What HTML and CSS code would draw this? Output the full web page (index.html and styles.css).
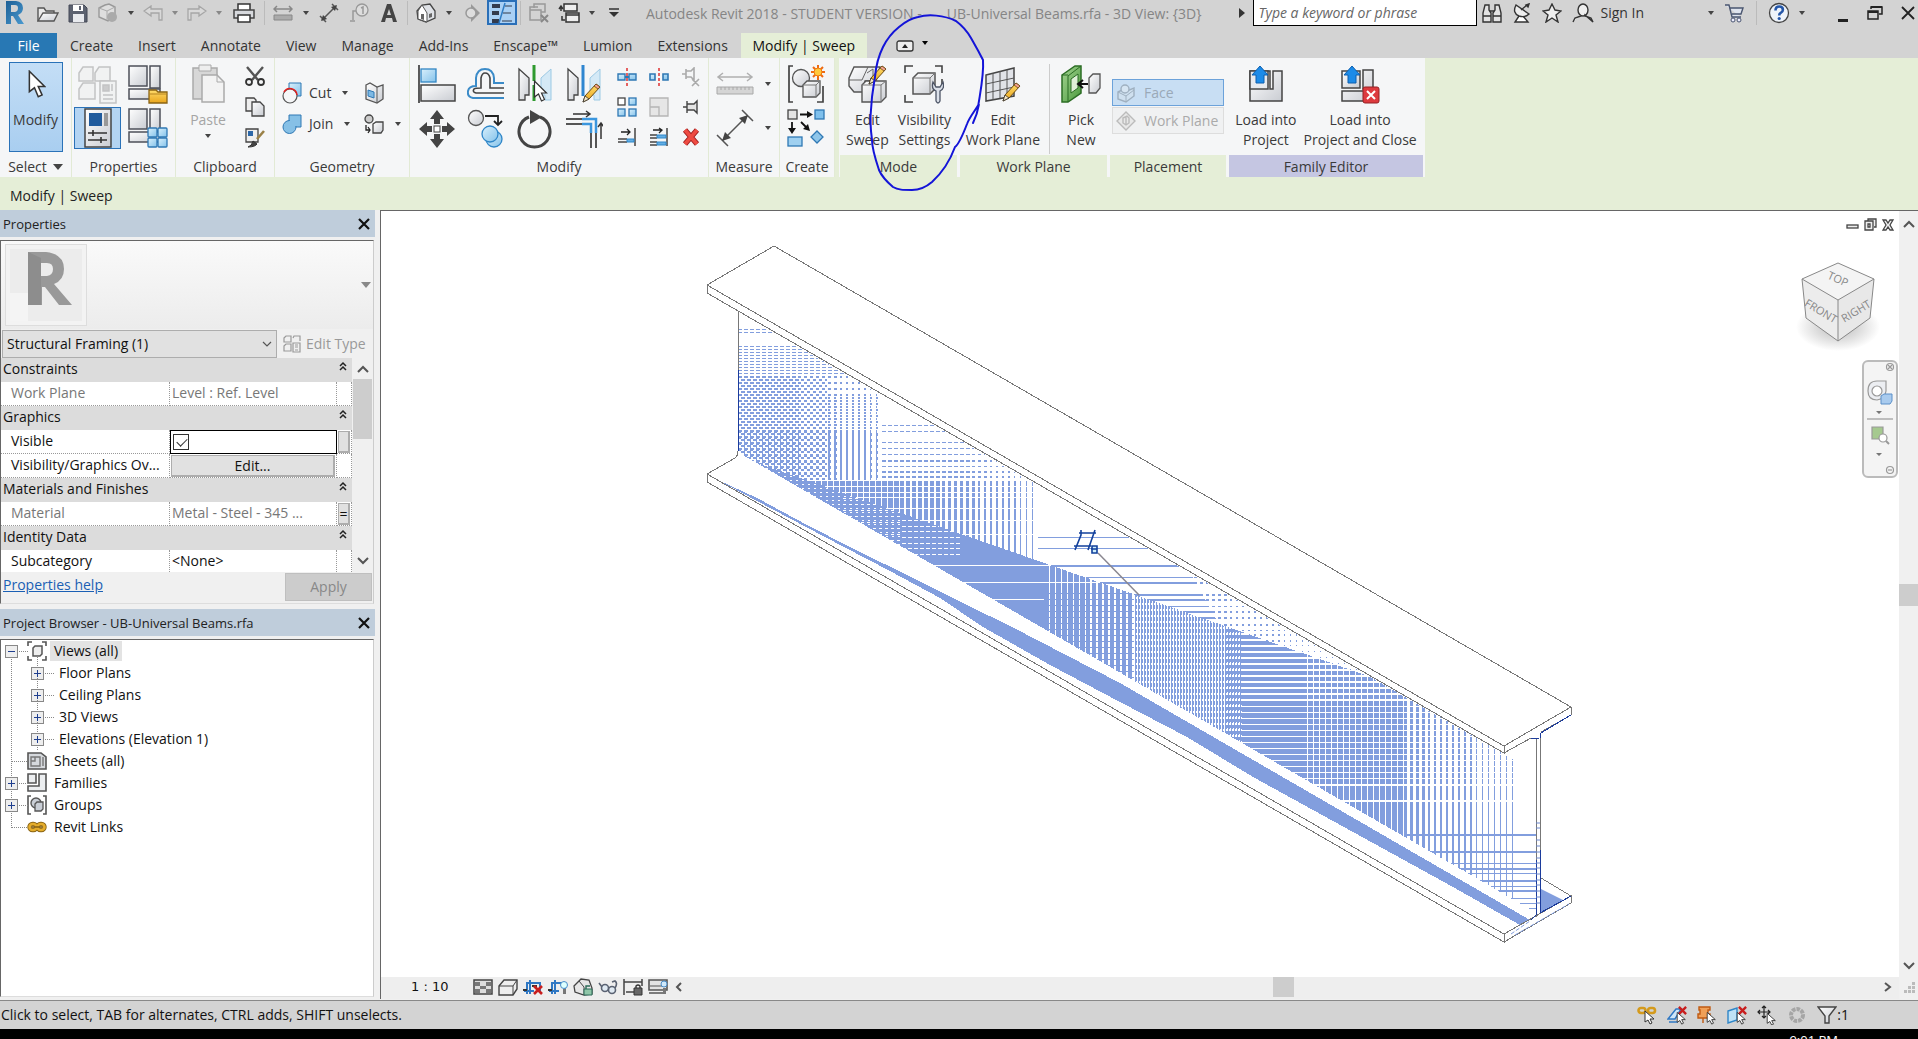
FILE: index.html
```html
<!DOCTYPE html>
<html lang="en">
<head>
<meta charset="utf-8">
<title>Autodesk Revit 2018</title>
<link rel="stylesheet" href="styles.css">
</head>
<body>
<svg class="defs" aria-hidden="true">
  <defs>
    <linearGradient id="gr" x1="0" y1="0" x2="1" y2="1"><stop offset="0" stop-color="#fff"/><stop offset="1" stop-color="#c9ccd2"/></linearGradient>
    <linearGradient id="bl" x1="0" y1="0" x2="1" y2="1"><stop offset="0" stop-color="#d9f0fc"/><stop offset="1" stop-color="#84c2ea"/></linearGradient>
    <linearGradient id="ye" x1="0" y1="0" x2="0" y2="1"><stop offset="0" stop-color="#ffdc6b"/><stop offset="1" stop-color="#e9a51c"/></linearGradient>
    <linearGradient id="gn" x1="0" y1="0" x2="1" y2="1"><stop offset="0" stop-color="#a5d493"/><stop offset="1" stop-color="#4a9a3c"/></linearGradient>
    <linearGradient id="rl" x1="0" y1="0" x2="1" y2="1"><stop offset="0" stop-color="#1d5f95"/><stop offset="1" stop-color="#4a9ad0"/></linearGradient>
    <radialGradient id="sh"><stop offset="0" stop-color="#999" stop-opacity=".7"/><stop offset="1" stop-color="#999" stop-opacity="0"/></radialGradient>
    <symbol id="pencil" viewBox="0 0 20 20"><path d="M1 19l2-6L14 1l4 3L7 16z" fill="url(#ye)" stroke="#6b4a12"/><path d="M1 19l2-6 4 3z" fill="#f8e7c4" stroke="#333" stroke-width=".8"/><path d="M12 3l2-2 4 3-2 2z" fill="#f0a090" stroke="#6b4a12" stroke-width=".8"/></symbol>
    <symbol id="cursor" viewBox="0 0 14 22"><path d="M1 1v16l4-3 3 7 3-1.500-3-6.500h5z" fill="#fff" stroke="#333" stroke-width="1.200"/></symbol>
    <symbol id="family" viewBox="0 0 40 40"><g fill="url(#gr)" stroke="#4d505a" stroke-width="1.500"><rect x="1" y="1" width="18" height="20"/><path d="M22 1h10v22H22z"/><path d="M1 24h31v10H1z"/></g></symbol>
    <symbol id="bincur" viewBox="0 0 20 20"><path d="M8 6v11l3-2 2 4 2-1-2-4h4z" fill="#fff" stroke="#333"/></symbol>
    <symbol id="redx" viewBox="0 0 10 10"><path d="M1 1l8 8M9 1L1 9" stroke="#c81e1e" stroke-width="2.600"/></symbol>
  </defs>
</svg>

<header class="titlebar">
  <div class="qat">
    <button class="q logo" aria-label="Revit"><svg width="20" height="26" viewBox="0 0 20 26"><path fill-rule="evenodd" d="M1 1h10q7 1 7 7 0 5-5 7l6 9h-6l-5-8H6v8H1zM6 5v7h4q3-.500 3-4 0-3-3-3z" fill="url(#rl)"/></svg></button>
    <button class="q" aria-label="Open"><svg width="22" height="20" viewBox="0 0 22 20"><path d="M1 18V5h6l2 3h8v3" fill="#e9e9e9" stroke="#555" stroke-width="1.400"/><path d="M1 18l5-8h15l-4 8z" fill="url(#gr)" stroke="#555" stroke-width="1.400"/></svg></button>
    <button class="q" aria-label="Save"><svg width="20" height="20" viewBox="0 0 20 20"><path d="M1 2h15l3 3v14H1z" fill="#5c6270" stroke="#444956"/><path d="M5 2h10v6H5z" fill="#fff"/><path d="M5 11h11v8H5z" fill="#e8eaee"/><path d="M11 3h2v4h-2z" fill="#5c6270"/></svg></button>
    <button class="q" aria-label="Synchronize"><svg width="22" height="22" viewBox="0 0 22 22"><path d="M2 6l6-3 4-1 6 3v8l-7 6-9-4z" fill="#dedede" stroke="#999" stroke-width="1.400"/><path d="M2 6l8 3v9M10 9l8-4" fill="none" stroke="#aaa"/><circle cx="15" cy="15" r="5" fill="#aaa"/></svg></button>
    <button class="c" aria-label="Menu"></button>
    <button class="q n" aria-label="Undo"><svg width="20" height="16" viewBox="0 0 20 16"><path d="M8 1L1 6l7 5V8h8v7h3V4H8z" fill="#d9d9d9" stroke="#a6a6a6" stroke-width="1.300"/></svg></button>
    <button class="c dim" aria-label="Undo list"></button>
    <button class="q n" aria-label="Redo"><svg width="20" height="16" viewBox="0 0 20 16"><path d="M12 1l7 5-7 5V8H4v7H1V4h11z" fill="#d9d9d9" stroke="#a6a6a6" stroke-width="1.300"/></svg></button>
    <button class="c dim" aria-label="Redo list"></button>
    <button class="q w" aria-label="Print"><svg width="22" height="20" viewBox="0 0 22 20"><path d="M5 7V1h12v6" fill="#fff" stroke="#333" stroke-width="1.500"/><path d="M1 7h20v8H1z" fill="#d7d9dd" stroke="#444" stroke-width="1.500"/><path d="M5 12h12v7H5z" fill="#fff" stroke="#333" stroke-width="1.500"/></svg></button>
    <i class="sep"></i>
    <button class="q" aria-label="Measure"><svg width="20" height="16" viewBox="0 0 20 16"><path d="M1 4h18M4 1L1 4l3 3M16 1l3 3-3 3" fill="none" stroke="#888" stroke-width="1.500"/><path d="M1 10h18v5H1z" fill="#aaa" stroke="#888"/></svg></button>
    <button class="c" aria-label="Menu"></button>
    <button class="q" aria-label="Aligned dimension"><svg width="20" height="20" viewBox="0 0 20 20"><path d="M3 17L17 3M1 13l6 6M13 1l6 6" stroke="#555" stroke-width="1.500"/><path d="M2 18l6-2-4-4zM18 2l-6 2 4 4z" fill="#444"/></svg></button>
    <button class="q" aria-label="Tag"><svg width="20" height="20" viewBox="0 0 20 20"><circle cx="13" cy="7" r="6" fill="#ddd" stroke="#999" stroke-width="1.300"/><path d="M7 8H4v9M1 18h5M12 5l2-1v7" fill="none" stroke="#999" stroke-width="1.500"/></svg></button>
    <button class="q" aria-label="Text"><svg width="18" height="20" viewBox="0 0 18 20"><path fill-rule="evenodd" d="M7 1h4l6 18h-4l-1-4H6l-1 4H1zM9 6l-2 6h4z" fill="#444"/></svg></button>
    <i class="sep"></i>
    <button class="q" aria-label="3D view"><svg width="20" height="20" viewBox="0 0 20 20"><path d="M1 8l5-6 8-1 5 7v7l-9 4-8-3z" fill="#dfe2e7" stroke="#444" stroke-width="1.300"/><path d="M2 8l4-6 5 8v9l-9-3z" fill="#fff" stroke="#555"/><path d="M5 11h3v6l-3-1zM13 11l3-1v4l-3 1z" fill="#666"/></svg></button>
    <button class="c" aria-label="Menu"></button>
    <button class="q" aria-label="Section"><svg width="18" height="20" viewBox="0 0 18 20"><circle cx="8" cy="10" r="5" fill="#ddd" stroke="#999" stroke-width="1.500"/><path d="M8 1l9 9-9 9V15q5-1 5-5T8 5z" fill="#999"/></svg></button>
    <button class="q on" aria-label="Thin lines"><svg width="24" height="22" viewBox="0 0 24 22"><path d="M2 4h8M2 11h7M2 19h7" stroke="#333b4d" stroke-width="4"/><path d="M15 4h7M13 11h8M12 19h10" stroke="#333b4d" stroke-width="1.200"/><path d="M15 1L9 21" stroke="#2f7cc4" stroke-width="1.500"/></svg></button>
    <i class="sep"></i>
    <button class="q" aria-label="Close hidden"><svg width="22" height="20" viewBox="0 0 22 20"><path d="M6 5V1h11v8h-4M2 7h11v10H2zM2 7V4h8" fill="none" stroke="#999" stroke-width="1.500"/><path d="M13 12l7 7M20 12l-7 7" stroke="#888" stroke-width="2"/></svg></button>
    <button class="q" aria-label="Switch windows"><svg width="22" height="22" viewBox="0 0 22 22"><path d="M6 2h13v7H6zM8 11h13v9H8z" fill="#eee" stroke="#333" stroke-width="1.500"/><path d="M8 13h13M3 5v4M1 7l2-3 2 3M4 14v4h3" fill="none" stroke="#333" stroke-width="1.500"/></svg></button>
    <button class="c" aria-label="Menu"></button>
    <button class="q n" aria-label="Customize"><svg width="12" height="10" viewBox="0 0 12 10"><path d="M1 1h10" stroke="#333" stroke-width="1.500"/><path d="M1 4h10L6 9z" fill="#333"/></svg></button>
  </div>
  <h1 class="title"><span>Autodesk Revit 2018 - STUDENT VERSION -</span><span>UB-Universal Beams.rfa - 3D View: {3D}</span></h1>
  <div class="info">
    <i class="right-tri"></i>
    <input class="search" type="text" placeholder="Type a keyword or phrase" aria-label="Search">
    <button class="q" aria-label="Find"><svg width="20" height="20" viewBox="0 0 20 20"><path d="M3 2h4v5l2 3v9H1v-9zM13 2h4l2 8v9h-8v-9l2-3z" fill="#e3e3e3" stroke="#333" stroke-width="1.400"/><path d="M8 8h4M1 13h8M11 13h8" stroke="#333" stroke-width="1.400"/></svg></button>
    <button class="q" aria-label="Communication"><svg width="18" height="20" viewBox="0 0 18 20"><path d="M6 13l-4 6h13l-5-6" fill="#fff" stroke="#333" stroke-width="1.400"/><path d="M3 2q-4 8 3 11 6 2 10-2z" fill="#eee" stroke="#333" stroke-width="1.400"/><path d="M8 7l6-5M16 1l-3 1 2 2z" stroke="#333" stroke-width="1.400"/></svg></button>
    <button class="q" aria-label="Favorites"><svg width="20" height="20" viewBox="0 0 20 20"><path d="M10 1l3 6 6 1-5 4 2 7-6-4-6 4 2-7-5-4 6-1z" fill="#eee" stroke="#333" stroke-width="1.400"/></svg></button>
    <button class="signin"><svg width="22" height="20" viewBox="0 0 22 20"><ellipse cx="11" cy="7" rx="5" ry="6" fill="#eee" stroke="#333" stroke-width="1.400"/><path d="M1 19l2-4 6-2v-1M13 12v1l6 2 2 4z" fill="#eee" stroke="#333" stroke-width="1.400"/></svg>Sign In</button>
    <button class="c" aria-label="Account menu"></button>
    <button class="q" aria-label="App store"><svg width="20" height="20" viewBox="0 0 20 20"><path d="M1 2h4l3 12h9M6 5h13l-2 6H8" fill="#dfe4ee" stroke="#4a5670" stroke-width="1.400"/><circle cx="9" cy="17" r="2" fill="#eef" stroke="#4a5670"/><circle cx="15" cy="17" r="2" fill="#eef" stroke="#4a5670"/></svg></button>
    <i class="sep"></i>
    <button class="q" aria-label="Help"><svg width="22" height="22" viewBox="0 0 22 22"><circle cx="11" cy="11" r="9.500" fill="#eef3fa" stroke="#444" stroke-width="1.300"/><path d="M7.500 8.500q0-4 3.700-4t3.700 3.200q0 2-2.200 3.200-1.500.800-1.500 2.600" fill="none" stroke="#2456a8" stroke-width="2.600"/><circle cx="11.200" cy="16.500" r="1.600" fill="#2456a8"/></svg></button>
    <button class="c" aria-label="Help menu"></button>
    <span class="winctl">
      <button aria-label="Minimize"><svg width="12" height="20" viewBox="0 0 12 20"><path d="M1 16h10v3H1z" fill="#222"/></svg></button>
      <button aria-label="Restore"><svg width="16" height="16" viewBox="0 0 16 16"><path d="M4 4V2h11v7h-3M1 6h10v8H1z" fill="none" stroke="#222" stroke-width="1.500"/><path d="M1 6h10v2H1zM4 1h11v2H4z" fill="#222"/></svg></button>
      <button aria-label="Close"><svg width="14" height="14" viewBox="0 0 14 14"><path d="M1 1l12 12M13 1L1 13" stroke="#222" stroke-width="1.800"/></svg></button>
    </span>
  </div>
</header>

<nav class="tabs">
  <button class="file">File</button>
  <button>Create</button><button>Insert</button><button>Annotate</button><button>View</button><button>Manage</button><button>Add-Ins</button><button>Enscape™</button><button>Lumion</button><button>Extensions</button>
  <button class="active">Modify | Sweep</button>
  <button class="toggle" aria-label="Minimize ribbon"><svg width="18" height="12" viewBox="0 0 18 12"><rect x="1" y="1" width="16" height="10" rx="2" fill="#eee" stroke="#333" stroke-width="1.300"/><path d="M6 8l3-4 3 4z" fill="#222"/></svg></button>
  <button class="c dark" aria-label="Ribbon menu"></button>
</nav>

<section class="ribbon">
  <div class="panel p-select">
    <div class="body"><button class="big modify"><svg width="40" height="40" viewBox="0 0 40 40"><use href="#cursor" x="12" y="6" width="18" height="28"/></svg>Modify</button></div>
    <h2>Select <i class="tri"></i></h2>
  </div>
  <div class="panel p-props">
    <div class="body grid2">
      <button aria-label="Type properties"><svg width="40" height="40" viewBox="0 0 40 40" opacity=".45"><g fill="#eee" stroke="#888" stroke-width="1.500"><path d="M1 8l4-6h10v14H1zM17 8l4-6h11v14H17zM1 24l4-6h12v16H1z"/><path d="M22 16h16v22H22z"/></g><path d="M25 20h6v6h-6zM25 30h10M25 34h10M34 19v7" stroke="#888" fill="#999" stroke-width="1.500"/></svg></button>
      <button aria-label="Family types"><svg width="40" height="40" viewBox="0 0 40 40"><use href="#family"/><path d="M21 25h7l2 2h9v11H21z" fill="url(#ye)" stroke="#8a6414" stroke-width="1.300"/><path d="M21 29h18" stroke="#b58320"/></svg></button>
      <button class="sel" aria-label="Properties"><svg width="28" height="40" viewBox="0 0 28 40"><rect x="1" y="1" width="26" height="38" fill="url(#gr)" stroke="#444" stroke-width="1.500"/><path d="M5 5h13v13H5z" fill="#1f5a9c"/><path d="M20 5h4v13h-4z" fill="#999"/><path d="M4 25h19M4 32h19M9 22v6M17 29v6" stroke="#333" stroke-width="1.600"/></svg></button>
      <button aria-label="Type catalog"><svg width="40" height="40" viewBox="0 0 40 40"><use href="#family"/><g fill="url(#bl)" stroke="#2f78b4" stroke-width="1.300"><rect x="20" y="20" width="9" height="9" rx="1"/><rect x="30" y="20" width="9" height="9" rx="1"/><rect x="20" y="30" width="9" height="9" rx="1"/><rect x="30" y="30" width="9" height="9" rx="1"/></g></svg></button>
    </div>
    <h2>Properties</h2>
  </div>
  <div class="panel p-clip">
    <div class="body row">
      <button class="big off"><svg width="40" height="40" viewBox="0 0 40 40"><path d="M5 4h24v31H5z" fill="#d7d7d7" stroke="#aaa" stroke-width="1.500"/><path d="M11 1h12v6H11z" fill="#eee" stroke="#aaa"/><path d="M14 11h15l7 7v20H14z" fill="#f3f3f3" stroke="#aaa" stroke-width="1.500"/><path d="M29 11v7h7" fill="none" stroke="#aaa"/></svg>Paste<i class="caret"></i></button>
      <div class="stack">
        <button aria-label="Cut"><svg width="22" height="20" viewBox="0 0 22 20"><path d="M3 1l11 13M19 1L8 14" stroke="#555" stroke-width="2.400"/><circle cx="5" cy="16" r="3" fill="none" stroke="#333" stroke-width="1.800"/><circle cx="17" cy="16" r="3" fill="none" stroke="#333" stroke-width="1.800"/></svg></button>
        <button aria-label="Copy"><svg width="22" height="20" viewBox="0 0 22 20"><path d="M2 1h8l2 2v11H2z" fill="#eee" stroke="#444" stroke-width="1.300"/><path d="M8 5h8l4 4v10H8z" fill="url(#gr)" stroke="#444" stroke-width="1.300"/></svg></button>
        <button aria-label="Match"><svg width="22" height="20" viewBox="0 0 22 20"><path d="M2 1h12v13H2z" fill="#eee" stroke="#444" stroke-width="1.300"/><path d="M4 3h5v5H4z" fill="#2c67a8"/><path d="M20 3l-7 8" stroke="#9a8046" stroke-width="2.600"/><path d="M4 19q4-1 5-6l4 3q-2 3-9 3z" fill="#444" stroke="#333"/></svg></button>
      </div>
    </div>
    <h2>Clipboard</h2>
  </div>
  <div class="panel p-geo">
    <div class="body geo">
      <button><svg width="20" height="22" viewBox="0 0 20 22"><path d="M7 1h12v13H7z" fill="url(#bl)" stroke="#2f78b4"/><circle cx="8" cy="14" r="7" fill="#f5f6f7" stroke="#555" stroke-width="1.200"/><path d="M2 10a7 7 0 0 1 13 3" fill="none" stroke="#e02020" stroke-width="1.600"/></svg>Cut<i class="caret"></i></button>
      <button aria-label="Cope"><svg width="20" height="22" viewBox="0 0 20 22"><path d="M2 3l4-2 7 4 6-2v14l-6 4-11-4z" fill="url(#gr)" stroke="#555" stroke-width="1.300"/><path d="M13 5v16" stroke="#555"/><path d="M4 8l6 2v6l-6-2z" fill="#7db9e4" stroke="#2f78b4"/></svg></button>
      <button><svg width="20" height="22" viewBox="0 0 20 22"><path d="M7 2h12v12H7z" fill="#86c0e6" stroke="#2f78b4"/><circle cx="7.500" cy="14" r="6.500" fill="#86c0e6" stroke="#2f78b4"/><path d="M8 3h10v10H8z" fill="#86c0e6"/></svg>Join<i class="caret"></i></button>
      <button aria-label="Split face"><svg width="20" height="22" viewBox="0 0 20 22"><circle cx="5" cy="6" r="4" fill="#ccc" stroke="#444" stroke-width="1.300"/><path d="M9 11l3-2h7v8l-2 3H9z" fill="url(#gr)" stroke="#444" stroke-width="1.300"/><path d="M2 12v5h4M4 14l2 3-2 3" fill="none" stroke="#222" stroke-width="1.300"/></svg><i class="caret"></i></button>
    </div>
    <h2>Geometry</h2>
  </div>
  <div class="panel p-modify">
    <div class="body row">
      <div class="grid4">
        <button aria-label="Align"><svg width="38" height="40" viewBox="0 0 38 40"><path d="M1 1v38" stroke="#333" stroke-width="1.600"/><rect x="3" y="5" width="15" height="13" fill="url(#bl)" stroke="#3286c4" stroke-width="1.300"/><rect x="3" y="21" width="34" height="16" fill="url(#gr)" stroke="#444" stroke-width="1.500"/></svg></button>
        <button aria-label="Offset"><svg width="38" height="40" viewBox="0 0 38 40"><path d="M37 34H6q-6-1-5-7 1-5 8-5V14q1-9 9-9t9 9v5h10" fill="none" stroke="#3b8bc8" stroke-width="2"/><path d="M37 29H9q-4-1-2-4 1-1 7-1V14q1-5 4-5 4 0 5 5v10h14" fill="none" stroke="#444" stroke-width="1.600"/></svg></button>
        <button aria-label="Mirror pick"><svg width="38" height="40" viewBox="0 0 38 40"><path d="M3 5l10 9v17H9v5H3z" fill="url(#gr)" stroke="#444" stroke-width="1.300"/><path d="M35 5l-10 9v17h4v5h6z" fill="#d4e9f6" stroke="#9cc9e4"/><path d="M18 1v38" stroke="#2f9a2f" stroke-width="3" stroke-dasharray="16 4"/><use href="#cursor" x="17" y="16" width="15" height="22"/></svg></button>
        <button aria-label="Mirror draw"><svg width="38" height="40" viewBox="0 0 38 40"><path d="M3 5l10 9v17H9v5H3z" fill="url(#gr)" stroke="#444" stroke-width="1.300"/><path d="M35 5l-10 9v17h4v5h6z" fill="#d4e9f6" stroke="#9cc9e4"/><path d="M18 1v31" stroke="#2f86d0" stroke-width="3"/><use href="#pencil" x="17" y="19" width="20" height="20"/></svg></button>
        <button aria-label="Move"><svg width="38" height="40" viewBox="0 0 38 40"><path d="M19 1l7 9h-4v5h-6v-5h-4zM19 39l7-9h-4v-5h-6v5h-4zM1 20l8-7v4h5v6H9v4zM37 20l-8-7v4h-5v6h5v4z" fill="#444"/><rect x="16" y="17" width="6" height="6" fill="#fff" stroke="#444"/></svg></button>
        <button aria-label="Copy"><svg width="38" height="40" viewBox="0 0 38 40"><circle cx="9" cy="9" r="7.500" fill="url(#gr)" stroke="#555" stroke-width="1.300"/><path d="M18 7h13v8M27 12l4 4 4-4" fill="none" stroke="#222" stroke-width="1.800"/><circle cx="27" cy="30" r="8" fill="url(#bl)" stroke="#2f86c8" stroke-width="1.300"/><circle cx="23" cy="25" r="8" fill="url(#bl)" stroke="#2f86c8" stroke-width="1.300"/></svg></button>
        <button aria-label="Rotate"><svg width="38" height="40" viewBox="0 0 38 40"><path d="M24 8a15.500 15.500 0 1 1-11 0" fill="none" stroke="#444" stroke-width="3"/><path d="M14 1l12 7-12 7z" fill="#444"/></svg></button>
        <button aria-label="Trim"><svg width="38" height="40" viewBox="0 0 38 40"><path d="M1 10h16M1 15h16M26 24v15M31 24v15" stroke="#555" stroke-width="2"/><path d="M17 10h14v14M17 15h9v9" fill="none" stroke="#3b96de" stroke-width="2.500"/><path d="M8 5h17M21 2l4 3-4 3M36 30V14M33 18l3-4 3 4" fill="none" stroke="#333" stroke-width="1.500"/></svg></button>
      </div>
      <div class="grid3">
        <button aria-label="Split"><svg width="20" height="20" viewBox="0 0 20 20"><path d="M1 7h7v6H1zM12 7h7v6h-7z" fill="url(#bl)" stroke="#2f78b4" stroke-width="1.400"/><path d="M8 10h4" stroke="#2f78b4" stroke-width="2"/><path d="M10 1v18" stroke="#e03030" stroke-width="1.500" stroke-dasharray="3 2"/></svg></button>
        <button aria-label="Split with gap"><svg width="20" height="20" viewBox="0 0 20 20"><path d="M1 7h5v6H1zM14 7h5v6h-5z" fill="url(#bl)" stroke="#2f78b4" stroke-width="1.600"/><path d="M10 1v18" stroke="#e03030" stroke-width="1.500" stroke-dasharray="3 2"/></svg></button>
        <button aria-label="Unpin"><svg width="20" height="20" viewBox="0 0 20 20"><path d="M1 7h4M5 2v10M5 4h5l3-3v12l-3-3H5M11 12l7 7M18 12l-7 7" fill="none" stroke="#aaa" stroke-width="1.600"/></svg></button>
        <button aria-label="Array"><svg width="20" height="20" viewBox="0 0 20 20"><g fill="url(#bl)" stroke="#2f78b4" stroke-width="1.300"><rect x="1" y="1" width="7" height="7" fill="#fff" stroke="#444"/><rect x="12" y="1" width="7" height="7"/><rect x="1" y="12" width="7" height="7"/><rect x="12" y="12" width="7" height="7"/></g></svg></button>
        <button aria-label="Scale"><svg width="20" height="20" viewBox="0 0 20 20"><path d="M1 1h18v18H1zM1 10h9v9" fill="#e6e6e6" stroke="#b5b5b5" stroke-width="1.300"/></svg></button>
        <button aria-label="Pin"><svg width="20" height="20" viewBox="0 0 20 20"><path d="M2 10h4M6 4v12M6 7h7l3-3v12l-3-3H6z" fill="#e4e4e4" stroke="#444" stroke-width="1.400"/></svg></button>
        <button aria-label="Trim single"><svg width="20" height="20" viewBox="0 0 20 20"><path d="M1 12h9M1 15h9M18 1v18" stroke="#444" stroke-width="1.500"/><path d="M10 12h7v3h-7z" fill="#62aee4" stroke="#2f86c8"/><path d="M4 5h9M10 2l3 3-3 3" fill="none" stroke="#222" stroke-width="1.300"/></svg></button>
        <button aria-label="Trim multiple"><svg width="20" height="20" viewBox="0 0 20 20"><path d="M1 8h7M1 11h7M1 15h7M1 18h7M18 1v18" stroke="#444" stroke-width="1.500"/><path d="M8 8h9v3H8zM8 15h9v3H8z" fill="#62aee4" stroke="#2f86c8"/><path d="M4 3h9M10 1l3 2-3 3" fill="none" stroke="#222" stroke-width="1.300"/></svg></button>
        <button aria-label="Delete"><svg width="20" height="20" viewBox="0 0 20 20"><path d="M4 3l12 14M16 3L4 17" stroke="#a02020" stroke-width="5.500"/><path d="M4 3l12 14M16 3L4 17" stroke="#ee4b42" stroke-width="3.500"/></svg></button>
      </div>
    </div>
    <h2>Modify</h2>
  </div>
  <div class="panel p-measure">
    <div class="body stack2">
      <button aria-label="Measure between"><svg width="38" height="40" viewBox="0 0 38 40"><path d="M2 13h34M7 9l-5 4 5 4M31 9l5 4-5 4" fill="none" stroke="#b0b0b0" stroke-width="1.500"/><path d="M1 23h36v7H1z" fill="#d5d5d5" stroke="#a8a8a8"/><path d="M5 23v3M9 23v3M13 23v3M17 23v3M21 23v3M25 23v3M29 23v3M33 23v3" stroke="#a8a8a8"/></svg><i class="caret"></i></button>
      <button aria-label="Dimension"><svg width="38" height="40" viewBox="0 0 38 40"><path d="M6 33L32 7M1 27l11 11M26 2l11 11" stroke="#555" stroke-width="1.500"/><path d="M6 33l3-9 6 6zM32 7l-9 3 6 6z" fill="#444"/></svg><i class="caret"></i></button>
    </div>
    <h2>Measure</h2>
  </div>
  <div class="panel p-create">
    <div class="body stack2">
      <button aria-label="Create group"><svg width="38" height="40" viewBox="0 0 38 40"><path d="M6 2H2v36h4M30 38h6V22" fill="none" stroke="#444" stroke-width="1.700"/><circle cx="14" cy="14" r="8.500" fill="url(#gr)" stroke="#555" stroke-width="1.300"/><path d="M16 21l4-4h13v12l-4 4H16z" fill="url(#gr)" stroke="#555" stroke-width="1.300"/><path d="M16 21h13l4-4M29 21v12" fill="none" stroke="#777"/><path d="M31 1v15M24 8h15M26 3l10 10M36 3L26 13" stroke="#ee6a12" stroke-width="2"/><circle cx="31" cy="8" r="4" fill="#ffc83c" stroke="#ee7a12"/></svg></button>
      <button aria-label="Create similar"><svg width="38" height="40" viewBox="0 0 38 40"><rect x="1" y="2" width="9" height="9" fill="#e4e4e4" stroke="#444" stroke-width="1.300"/><rect x="28" y="2" width="9" height="9" fill="#7fc0ec" stroke="#2f78b4" stroke-width="1.300"/><rect x="1" y="29" width="14" height="9" fill="#9fd0f0" stroke="#2f78b4" stroke-width="1.300"/><path d="M30 23l6 6-6 6-6-6z" fill="#8fc6ea" stroke="#2f78b4" stroke-width="1.300"/><path d="M13 6.500h8M5 14v8M14 14l6 6" fill="none" stroke="#111" stroke-width="1.800"/><path d="M20 3l6 3.500-6 3.500zM1 20h8l-4 6zM23 23l-7-2 5-5z" fill="#111"/></svg></button>
    </div>
    <h2>Create</h2>
  </div>
  <div class="panel ctx p-mode">
    <div class="body row">
      <button class="big"><svg width="40" height="40" viewBox="0 0 40 40"><path d="M7 3h26l-4 14H18l-2 11H7l-5-6v-8z" fill="url(#gr)" stroke="#555" stroke-width="1.400"/><path d="M2 16h13l6-13M20 9l6-4v7" fill="none" stroke="#666"/><path d="M15 21l4-4h20v16l-5 5H15z" fill="url(#gr)" stroke="#555" stroke-width="1.400"/><path d="M15 21h19l5-4M34 21v17" fill="none" stroke="#777"/><use href="#pencil" x="21" y="1" width="20" height="20"/></svg>Edit<br>Sweep</button>
      <button class="big"><svg width="40" height="40" viewBox="0 0 40 40"><path d="M1 9V2h8M31 2h7v7M1 31v7h8M38 20v-5" fill="none" stroke="#444" stroke-width="1.600"/><path d="M9 14l5-5h17v16l-5 5H9z" fill="url(#gr)" stroke="#555" stroke-width="1.500"/><path d="M9 14h17l5-5M26 14v16" fill="none" stroke="#777"/><path d="M29 18q-2 7 3 9v10q2 4 4 0V27q5-2 3-9l-3 5h-4z" fill="#dce1ea" stroke="#4d5566" stroke-width="1.300"/></svg>Visibility<br>Settings</button>
    </div>
    <h2>Mode</h2>
  </div>
  <div class="panel ctx p-work">
    <div class="body row">
      <button class="big"><svg width="40" height="40" viewBox="0 0 40 40"><path d="M3 11l28-7v28L3 37z" fill="#e1e3e8" stroke="#444" stroke-width="1.500"/><path d="M10 9v27M17 7v27M24 6v27M3 20l28-6M3 29l28-6" stroke="#555"/><use href="#pencil" x="19" y="18" width="20" height="20"/></svg>Edit<br>Work Plane</button>
      <button class="big lined"><svg width="40" height="40" viewBox="0 0 40 40"><path d="M1 11L14 2h6v27L7 38H1z" fill="url(#gn)" stroke="#2b6d24" stroke-width="1.500"/><path d="M7 12l13-10M7 12v26M1 11h6" stroke="#2b6d24"/><path d="M10 15l7-5v14l-7 5z" fill="#dff0d8" stroke="#2b6d24"/><path d="M27 20h-9M22 16l-5 4 5 4" fill="none" stroke="#111" stroke-width="2"/><path d="M28 14l4-4h7v14l-4 5h-7z" fill="url(#gr)" stroke="#555" stroke-width="1.300"/></svg>Pick<br>New</button>
    </div>
    <h2>Work Plane</h2>
  </div>
  <div class="panel ctx p-place">
    <div class="body place">
      <button class="face" disabled><svg width="20" height="20" viewBox="0 0 20 20"><path d="M2 9l6-3 3 2 7-3v8l-8 6-8-3z" fill="#cfe0ef" stroke="#9fb0c0" stroke-width="1.400"/><circle cx="9" cy="6" r="4" fill="#d6e5f2" stroke="#9fb0c0" stroke-width="1.400"/><path d="M2 9l8 4v6M10 13l8-6" fill="none" stroke="#9fb0c0"/></svg>Face</button>
      <button disabled><svg width="20" height="20" viewBox="0 0 20 20"><path d="M10 1l9 9-9 9-9-9z" fill="#e8e8e8" stroke="#bbb" stroke-width="1.400"/><path d="M7 7l4-2 2 2v5l-3 2-3-2zM10 5v9" fill="none" stroke="#bbb" stroke-width="1.400"/></svg>Work Plane</button>
    </div>
    <h2>Placement</h2>
  </div>
  <div class="panel ctx fam">
    <div class="body row">
      <button class="big"><svg width="40" height="40" viewBox="0 0 40 40"><path d="M4 7h20v18h3V7h9v30H4z" fill="url(#gr)" stroke="#444" stroke-width="1.500"/><rect x="4" y="7" width="18" height="18" fill="#e8eaee" stroke="#444" stroke-width="1.500"/><path d="M14 2l8 9h-4v8h-8v-8H6z" fill="#1c8be8" stroke="#0d5fae"/></svg>Load into<br>Project</button>
      <button class="big"><svg width="40" height="40" viewBox="0 0 40 40"><g fill="url(#gr)" stroke="#444" stroke-width="1.500"><rect x="2" y="7" width="18" height="17"/><path d="M23 6h10v19H23zM2 27h31v10H2z"/></g><path d="M12 2l8 9h-4v8H8v-8H4z" fill="#1c8be8" stroke="#0d5fae"/><rect x="23" y="23" width="16" height="16" rx="2" fill="#dd3a3e" stroke="#962024"/><path d="M27 27l8 8M35 27l-8 8" stroke="#fff" stroke-width="2"/></svg>Load into<br>Project and Close</button>
    </div>
    <h2>Family Editor</h2>
  </div>
</section>
<div class="options">Modify | Sweep</div>

<main>
  <aside>
    <header class="pal">Properties<button aria-label="Close properties"><svg width="12" height="12" viewBox="0 0 12 12"><path d="M1 1l10 10M11 1L1 11" stroke="#111" stroke-width="2.200"/></svg></button></header>
    <section class="box props">
      <div class="typesel">
        <div class="thumb"><svg width="80" height="80" viewBox="0 0 80 80"><rect x="4" y="4" width="72" height="72" fill="#ececec"/><path d="M4 48h18v28H4z" fill="#f4f4f4"/><path fill-rule="evenodd" d="M22 7h18q18 2 18 17 0 11-10 15l18 21H53L39 42h-3v18H22zM35 18v13h6q6-1 6-7t-6-6z" fill="#999"/><path d="M22 7l13 6v47H22z" fill="#858585" opacity=".6"/></svg></div>
        <i class="tri"></i>
      </div>
      <div class="filter">
        <span class="combo"><select aria-label="Category"><option>Structural Framing (1)</option></select><svg width="10" height="6" viewBox="0 0 10 6"><path d="M1 1l4 4 4-4" fill="none" stroke="#555" stroke-width="1.200"/></svg></span>
        <button class="etype" disabled><svg width="18" height="18" viewBox="0 0 18 18"><path d="M1 3l2-2h5v6H1zM10 3l1-2h6v5M1 11l2-2h5v7H1zM10 8h7v9h-7zM12 10h3M12 12h3M12 15h3" fill="none" stroke="#999" stroke-width="1.200"/></svg>Edit Type</button>
      </div>
      <div class="tablewrap">
        <div class="clip">
        <table>
          <colgroup><col class="k"><col><col class="b"></colgroup>
          <tr class="g"><th colspan="2">Constraints</th><td><svg class="chev" viewBox="0 0 8 10"><path d="M1 5l3-3 3 3M1 9l3-3 3 3"/></svg></td></tr>
          <tr class="ro"><th>Work Plane</th><td>Level : Ref. Level</td><td></td></tr>
          <tr class="g"><th colspan="2">Graphics</th><td><svg class="chev" viewBox="0 0 8 10"><path d="M1 5l3-3 3 3M1 9l3-3 3 3"/></svg></td></tr>
          <tr><th><label for="vis">Visible</label></th><td class="focus"><input type="checkbox" id="vis" checked></td><td class="bt"><button aria-label="Associate parameter"></button></td></tr>
          <tr><th>Visibility/Graphics Ov...</th><td class="bt"><button>Edit...</button></td><td></td></tr>
          <tr class="g"><th colspan="2">Materials and Finishes</th><td><svg class="chev" viewBox="0 0 8 10"><path d="M1 5l3-3 3 3M1 9l3-3 3 3"/></svg></td></tr>
          <tr class="ro"><th>Material</th><td>Metal - Steel - 345 ...</td><td class="bt"><button class="eq">=</button></td></tr>
          <tr class="g"><th colspan="2">Identity Data</th><td><svg class="chev" viewBox="0 0 8 10"><path d="M1 5l3-3 3 3M1 9l3-3 3 3"/></svg></td></tr>
          <tr><th>Subcategory</th><td>&lt;None&gt;</td><td></td></tr>
        </table>
        </div>
        <div class="vscroll small"><svg width="12" height="8" viewBox="0 0 12 8"><path d="M1 7l5-5 5 5"/></svg><i></i><svg width="12" height="8" viewBox="0 0 12 8"><path d="M1 1l5 5 5-5"/></svg></div>
      </div>
      <div class="foot"><a href="#">Properties help</a><button disabled>Apply</button></div>
    </section>
    <header class="pal">Project Browser - UB-Universal Beams.rfa<button aria-label="Close browser"><svg width="12" height="12" viewBox="0 0 12 12"><path d="M1 1l10 10M11 1L1 11" stroke="#111" stroke-width="2.200"/></svg></button></header>
    <section class="box browser">
      <ul class="tree">
        <li><div class="node"><button class="ex minus" aria-label="Collapse"></button><svg width="20" height="20" viewBox="0 0 20 20"><path d="M5 1H1v4M15 1h4v4M1 15v4h4M19 15v4h-4" fill="none" stroke="#555" stroke-width="1.600"/><path d="M6 7l2-2h7v8l-2 2H6z" fill="#eee" stroke="#555" stroke-width="1.500"/></svg><span class="hl">Views (all)</span></div>
          <ul>
            <li><button class="ex" aria-label="Expand"></button>Floor Plans</li>
            <li><button class="ex" aria-label="Expand"></button>Ceiling Plans</li>
            <li><button class="ex" aria-label="Expand"></button>3D Views</li>
            <li><button class="ex" aria-label="Expand"></button>Elevations (Elevation 1)</li>
          </ul></li>
        <li><div class="node"><i class="dash"></i><svg width="20" height="20" viewBox="0 0 20 20"><path d="M1 2h13l5 4v12H1z" fill="#d5d8dc" stroke="#555" stroke-width="1.600"/><path d="M4 6h9v9H4zM8 6v4H4M16 6v9" fill="none" stroke="#777" stroke-width="1.400"/></svg><span>Sheets (all)</span></div></li>
        <li><div class="node"><button class="ex" aria-label="Expand"></button><svg width="20" height="20" viewBox="0 0 20 20"><path d="M1 1h8v9H1zM1 13h11V1h7v17H1z" fill="#eceef0" stroke="#555" stroke-width="1.600"/></svg><span>Families</span></div></li>
        <li><div class="node"><button class="ex" aria-label="Expand"></button><svg width="20" height="20" viewBox="0 0 20 20"><path d="M4 1H1v18h3M16 1h3v18h-3" fill="none" stroke="#555" stroke-width="1.600"/><circle cx="9" cy="8" r="5" fill="#c9ced6" stroke="#555" stroke-width="1.400"/><path d="M8 9l2-2h6v7l-2 2H8z" fill="#c9ced6" stroke="#555" stroke-width="1.300"/></svg><span>Groups</span></div></li>
        <li><div class="node"><i class="dash"></i><svg width="20" height="20" viewBox="0 0 20 20"><g fill="none" stroke="#8a6414" stroke-width="4.400"><rect x="2.500" y="7" width="7" height="6" rx="3"/><rect x="10.500" y="7" width="7" height="6" rx="3"/></g><g fill="none" stroke="#e5ad2c" stroke-width="2.600"><rect x="2.500" y="7" width="7" height="6" rx="3"/><rect x="10.500" y="7" width="7" height="6" rx="3"/></g><path d="M5 10h10" stroke="#8a6414" stroke-width="1.600"/></svg><span>Revit Links</span></div></li>
      </ul>
    </section>
  </aside>

  <section class="view">
    <div class="canvas">
      <svg class="beam" width="1300" height="766" viewBox="381 211 1300 766">
        <path id="hatch" d="" fill="#829ede" shape-rendering="crispEdges"/>
        <path d="M718 480L757 498L807 525L850 547L917 580L965 604L1012 627L1120 683L1530 920L1520 925L1453 887L1353 832L1253 777L1187 737L1120 702L1050 665L983 627L940 598L890 571L823 536L757 501Z" fill="#829ede" shape-rendering="crispEdges"/>
        <path d="M1541 889L1563 900L1541 913Z" fill="#829ede"/>
        <g fill="none" stroke="#777" stroke-width="1" shape-rendering="crispEdges">
          <path d="M707 285L774 246L1571 707V715L1541 732M707 285V293L1504 753V746L707 285M1504 746L1571 707M1504 753L1531 738"/>
          <path d="M738 311V451Q738 456 735 458L707 474V482L1504 942V934L707 474M1504 934L1571 896V903L1504 942M1541 878L1571 896M1536 738V917M1540 738V914"/>
        </g>
        <path d="M738 370V451M1571 715L1541 733L1540 738M1531 738H1539M1536 860V915L1531 920M1540 850V913L1571 896" fill="none" stroke="#1c3c9c" shape-rendering="crispEdges"/>
        <path d="M1536 823h4M1536 828h4M1536 840h4M1536 846h4M1536 852h4M1536 858h4M1536 863h4M1536 868h4M1536 874h4M1536 880h4M1536 885h4M1536 891h4M1536 897h4M1536 903h4" stroke="#6d88cc"/>
        <path d="M1511 934L1530 921M1515 935L1569 904" stroke="#829ede" stroke-dasharray="4 2"/>
        <path d="M1098 553L1139 595" stroke="#8a8790" stroke-width="1.500"/>
        <path d="M1081 530v5l-6 15M1079 533h17M1095 530l-7 20M1074 546h17" fill="none" stroke="#12409c" stroke-width="1.600"/>
        <path d="M1092 546h5v7h-5zM1091 549h6" fill="#cfeefa" stroke="#12409c" stroke-width="1.600"/>
      </svg>
      <div class="docctl"><svg width="50" height="14" viewBox="0 0 50 14"><g fill="#eee" stroke="#444" stroke-width="1.300"><rect x="1" y="7" width="11" height="3"/><path d="M22 3V1h8v8h-2M19 3h8v9h-8zM22 6h2v3h-2z"/><path d="M37 2h3l2 3 2-3h3l-3 5 3 5h-3l-2-3-2 3h-3l3-5z"/></g></svg></div>
      <svg class="cube" width="100" height="100" viewBox="1790 255 100 100">
        <ellipse cx="1838" cy="327" rx="42" ry="24" fill="url(#sh)"/>
        <path d="M1802 279L1838 263L1874 279L1838 300Z" fill="#f4f4f4"/><path d="M1802 279L1838 300V341L1806 318Z" fill="#ececec"/><path d="M1838 300L1874 279L1870 318L1838 341Z" fill="#e8e8e8"/>
        <path d="M1802 279L1838 263L1874 279L1870 318L1838 341L1806 318ZM1802 279L1838 300L1874 279M1838 300V341" fill="none" stroke="#888"/>
        <g class="cubetext"><text x="1838" y="283" transform="rotate(24 1838 279)">TOP</text><text x="1821" y="315" transform="rotate(31 1821 311)">FRONT</text><text x="1856" y="315" transform="rotate(-31 1856 311)">RIGHT</text></g>
      </svg>
      <svg class="navbar" width="36" height="118" viewBox="0 0 36 118"><rect x="1" y="1" width="34" height="116" rx="5" fill="#f4f4f4" stroke="#bbb" stroke-width="2"/><g fill="none" stroke="#999" stroke-width="1.200"><circle cx="28" cy="7" r="3.500"/><path d="M26 5l4 4M30 5l-4 4"/><circle cx="28" cy="110" r="3.500"/><path d="M26 110h4"/><path d="M15 21h9v10q-1 8-9 9-9 0-9-9 0-10 9-10z" fill="#eceef2"/><circle cx="15" cy="31" r="5" fill="#fff"/><path d="M5 59h26"/><path d="M10 67h11v12H10z" fill="#a5c98f"/><circle cx="21" cy="78" r="4" fill="#fff"/><path d="M24 81l3 3" stroke-width="2"/></g><path d="M19 36l3-2h8v7l-2 3h-9z" fill="#a9cbee" stroke="#5a8fc8"/><path d="M14 51h6l-3 3zM14 93h6l-3 3z" fill="#777"/></svg>
    </div>
    <div class="vscroll large"><svg width="12" height="8" viewBox="0 0 12 8"><path d="M1 7l5-5 5 5"/></svg><i></i><svg width="12" height="8" viewBox="0 0 12 8"><path d="M1 1l5 5 5-5"/></svg></div>
    <div class="viewbar">
      <span class="scale">1 : 10</span>
      <button aria-label="Detail level"><svg viewBox="0 0 20 18"><rect x="1" y="2" width="18" height="14" fill="#ddd" stroke="#444" stroke-width="1.500"/><path d="M2 4h5v4H2zM13 4h5v4h-5zM7 8h6v3H7zM2 11h5v4H2zM13 11h5v4h-5z" fill="#777"/></svg></button>
      <button aria-label="Visual style"><svg viewBox="0 0 20 18"><path d="M1 8l5-6h13v9l-4 6H1z" fill="#eee" stroke="#444" stroke-width="1.400"/><path d="M1 8h14l4-6M15 8v9" fill="none" stroke="#444"/></svg></button>
      <button aria-label="Crop view"><svg viewBox="0 0 20 18"><path d="M1 13h10M4 16V5h13v8M7 2v14" fill="none" stroke="#2f78c4" stroke-width="2"/><path d="M0 12h4M9 8h5" stroke="#333" stroke-width="2"/><use href="#redx" x="10" y="7" width="10" height="10"/></svg></button>
      <button aria-label="Crop region"><svg viewBox="0 0 20 18"><path d="M1 13h10M4 16V5h13v8M7 2v14" fill="none" stroke="#2f78c4" stroke-width="2"/><path d="M0 12h4" stroke="#333" stroke-width="2"/><circle cx="16" cy="7" r="3.500" fill="#dff" stroke="#4a8cc8"/><path d="M15 11h3v5h-3z" fill="#777"/></svg></button>
      <button aria-label="Lock view"><svg viewBox="0 0 20 18"><path d="M1 8l7-7 8 1 3 8v6l-8 1-9-3z" fill="#e6e6e6" stroke="#444" stroke-width="1.300"/><path d="M1 8l5-5 5 6v8" fill="none" stroke="#444"/><path d="M11 11h8v6h-8z" fill="#8fc6a8" stroke="#2d6b58"/><path d="M13 11V8h4" fill="none" stroke="#2d6b58" stroke-width="1.400"/></svg></button>
      <button aria-label="Hide isolate"><svg viewBox="0 0 20 18"><circle cx="7" cy="10" r="3.500" fill="#dfe9f2" stroke="#5a6272" stroke-width="1.600"/><circle cx="14" cy="12" r="3.500" fill="#dfe9f2" stroke="#5a6272" stroke-width="1.600"/><path d="M4 9L1 5M17 10q3-5 0-7l-3 1" fill="none" stroke="#5a6272" stroke-width="1.600"/></svg></button>
      <button aria-label="Constraints"><svg viewBox="0 0 20 18"><path d="M1 1v16M19 1v7M1 4h18M3 14h8" stroke="#444" stroke-width="1.500"/><path d="M11 10h8v7h-8z" fill="#666" stroke="#333"/><path d="M13 10V8q2-2 4 0v2" fill="none" stroke="#333" stroke-width="1.400"/></svg></button>
      <button aria-label="Preview"><svg viewBox="0 0 20 18"><path d="M1 2h18v10H1zM1 15h15" fill="#e4e4e4" stroke="#555" stroke-width="1.600"/><path d="M2 8h12" stroke="#555"/><circle cx="16" cy="6" r="3" fill="#cfe8fa" stroke="#4a8cc8"/><path d="M15 10h3v6h-3z" fill="#777"/></svg></button>
      <svg class="lt" width="7" height="10" viewBox="0 0 7 10"><path d="M6 1L2 5l4 4"/></svg>
      <i class="hthumb"></i>
      <svg class="gt" width="8" height="10" viewBox="0 0 8 10"><path d="M1 1l5 4-5 4"/></svg>
    </div>
    <svg class="grip" width="14" height="14" viewBox="0 0 14 14"><path d="M9 1h3v3H9zM5 5h3v3H5zM9 5h3v3H9zM1 9h3v3H1zM5 9h3v3H5zM9 9h3v3H9z" fill="#bbb"/></svg>
  </section>
</main>

<footer class="status">
  <span>Click to select, TAB for alternates, CTRL adds, SHIFT unselects.</span>
  <div class="sicons">
    <button aria-label="Select links"><svg viewBox="0 0 20 20"><g fill="none" stroke="#d49a1c" stroke-width="2.600"><rect x="1.500" y="3" width="7" height="5" rx="2.500"/><rect x="11" y="3" width="7" height="5" rx="2.500"/></g><use href="#bincur" width="20" height="20"/></svg></button>
    <button aria-label="Select underlay"><svg viewBox="0 0 20 20"><path d="M1 14L9 4h5L8 14zM2 17h9" fill="#cfe6f8" stroke="#2f78c4" stroke-width="1.500"/><use href="#redx" x="11" y="1" width="9" height="9"/><use href="#bincur" x="3" y="2" width="18" height="18"/></svg></button>
    <button aria-label="Select pinned"><svg viewBox="0 0 20 20"><path d="M2 2h11v3h-2v4h2v4H1V9h2V5H2zM6 13v5" fill="#f0a058" stroke="#c05a12" stroke-width="1.400"/><use href="#bincur" x="3" y="2" width="18" height="18"/></svg></button>
    <button aria-label="Select by face"><svg viewBox="0 0 20 20"><path d="M1 6l9-3v12l-9 3z" fill="#bfe2f6" stroke="#2f86c8" stroke-width="1.400"/><use href="#redx" x="11" y="1" width="9" height="9"/><use href="#bincur" x="3" y="2" width="18" height="18"/></svg></button>
    <button aria-label="Drag on selection"><svg viewBox="0 0 20 20"><path d="M7 1v12M1 7h12M5 3l2-2 2 2M5 11l2 2 2-2M3 5L1 7l2 2M11 5l2 2-2 2" fill="none" stroke="#222" stroke-width="1.200"/><use href="#bincur" x="3" y="3" width="18" height="18"/></svg></button>
    <button aria-label="Background processes"><svg viewBox="0 0 20 20"><circle cx="10" cy="10" r="6" fill="none" stroke="#a5a5a5" stroke-width="4" stroke-dasharray="3.500 1"/></svg></button>
    <button aria-label="Filter"><svg viewBox="0 0 20 20"><path d="M1 2h18l-7 9v7H8v-7z" fill="url(#gr)" stroke="#444" stroke-width="1.400"/></svg>:1</button>
  </div>
</footer>
<div class="taskbar"><time>9:01 PM</time></div>

<svg class="markup" width="130" height="190" viewBox="860 5 130 190"><path d="M973 123C977 115 978 110 979 104C974 112 969 118 967 124C962 137 958 145 955 147C951 158 944 171 932 182C925 188 919 190 912 190C903 190 898 190 893 187C886 181 882 177 879 170C874 155 872 148 872 140C870 125 870 118 871 110C872 90 874 85 875 77C876 65 879 55 883 47C888 37 894 31 899 27C905 22 912 18 918 17C928 14 944 15 956 21C964 27 967 31 971 38C975 45 978 50 983 60C984 75 981 88 978 107" fill="none" stroke="#1414d8" stroke-width="2" stroke-linecap="round"/></svg>
<script src="beam.js"></script>
</body>
</html>
```
FILE: styles.css
```css
* { box-sizing: border-box; }
body {
  margin: 0; height: 100vh; display: flex; flex-direction: column; overflow: hidden;
  font: 14px/20px "Open Sans", "Noto Sans", sans-serif; color: #111; background: #f0f0f0;
}
button { font: inherit; color: inherit; background: none; border: 0; padding: 0; margin: 0; display: flex; align-items: center; justify-content: center; }
svg { display: block; flex: none; }
i { display: block; }
h1, h2 { margin: 0; font: inherit; }
.defs { position: absolute; width: 0; height: 0; }

.titlebar { flex: none; height: 33px; display: flex; background: #d3d3d3; }
.qat, .info { display: flex; flex: none; height: 25px; align-items: center; }
.q { width: 30px; height: 25px; flex: none; }
.q.logo { width: 33px; padding-right: 4px; }
.q.n { width: 28px; }
.q.w { width: 34px; }
.q.on { background: #a9d0f5; border: 2px solid #2a6fb8; }
.c { width: 16px; height: 20px; flex: none; }
.c::before, .caret { content: ""; width: 0; height: 0; border: 3px solid transparent; border-top: 4px solid #444; border-bottom: 0; }
.c.dark::before { border-top-color: #000; }
.c.dim::before { border-top-color: #888; }
.sep { width: 1px; height: 24px; margin: 0 3px; background: #bbb; }
.info .sep { margin: 0 7px; }
.title { flex: 1; display: flex; gap: 25px; padding: 4px 0 0 18px; color: #858585; white-space: nowrap; overflow: hidden; }
.right-tri { margin: 0 8px 0 0; border: 5px solid transparent; border-left: 6px solid #333; border-right: 0; }
.search { width: 224px; height: 26px; border: 1px solid #000; border-top: 0; padding: 0 4px; background: #fff; font: italic 14px/20px "Open Sans", sans-serif; }
.search::placeholder { color: #666; opacity: 1; }
.signin { gap: 6px; margin: 0 59px 0 5px; color: #333; }
.winctl { display: flex; gap: 18px; margin: 0 3px 0 27px; }

.tabs { flex: none; height: 25px; display: flex; gap: 1px; background: #d3d3d3; color: #333; }
.tabs > button { padding: 0 12px; white-space: nowrap; }
.tabs .file { width: 57px; background: #2878b4; color: #fff; }
.tabs .active { width: 126px; background: #e5eed7; color: #111; }
.tabs .toggle { padding: 0 2px 0 28px; }
.tabs .c { padding: 0; }

.ribbon { flex: none; height: 119px; display: flex; background: #e5eed7; color: #3a3a3a; }
.panel { flex: none; display: flex; flex-direction: column; background: #f5f6f7; border-right: 1px solid #e2ead5; }
.body { height: 97px; padding-top: 6px; display: flex; justify-content: center; align-items: flex-start; }
.panel h2 { height: 22px; padding-top: 2px; display: flex; gap: 6px; align-items: center; justify-content: center; }
.tri { width: 0; height: 0; border: 5px solid transparent; border-top: 6px solid #444; border-bottom: 0; }
.ctx { border-right: 2px solid #f5f6f7; border-left: 1px solid #f5f6f7; }
.ctx h2 { background: #e5eed7; }
.fam h2 { background: #c5c6e2; }
.p-select { width: 72px; }
.p-props { width: 104px; }
.p-clip { width: 99px; }
.p-geo { width: 135px; }
.p-modify { width: 299px; }
.p-measure { width: 71px; }
.p-create { width: 55px; margin-right: 4px; }
.p-mode { width: 120px; }
.p-work { width: 150px; }
.p-place { width: 119px; }
.fam { width: 197px; }
.big { display: block; text-align: center; white-space: nowrap; line-height: 20px; }
.big svg { margin: 0 auto 6px; }
.body .modify { width: 54px; height: 90px; padding-bottom: 20px; margin-top: -2px; border: 1px solid #2a72b8; background: linear-gradient(#c4def6, #a9cef0); }
.off { color: #a5a5a5; }
.off .caret { margin: 4px auto 0; }
.grid2 { display: grid; grid-template-columns: 47px 46px; grid-template-rows: 40px 42px; gap: 3px; justify-content: center; padding-right: 3px; }
.grid2 button { width: 47px; height: 42px; }
.grid2 .sel { background: #b3d4f2; border: 1px solid #2a72b8; }
.p-clip .row { gap: 16px; padding-left: 4px; }
.stack { display: flex; flex-direction: column; gap: 11px; padding-top: 2px; }
.geo { display: grid; grid-template-columns: 80px 36px; grid-template-rows: 22px 22px; gap: 9px 2px; padding: 24px 0 0 7px; justify-content: start; }
.geo button { gap: 7px; justify-content: flex-start; }
.geo .caret { margin-left: 4px; }
.p-modify .row { justify-content: flex-start; padding-left: 8px; gap: 14px; }
.grid4 { display: grid; grid-template-columns: repeat(4, 38px); gap: 5px 11px; }
.grid3 { display: grid; grid-template-columns: repeat(3, 20px); gap: 10px 12px; padding-top: 3px; }
.stack2 { flex-direction: column; gap: 4px; justify-content: flex-start; padding-left: 7px; }
.stack2 button { gap: 11px; }
.p-mode .row { gap: 9px; }
.lined { border-left: 1px solid #ccc; padding: 0 5px 4px 11px; margin-left: 9px; }
.p-work .row { justify-content: flex-end; padding-right: 1px; }
.place { flex-direction: column; gap: 1px; padding: 21px 3px 0 2px; justify-content: flex-start; }
.place button { width: 112px; height: 27px; gap: 8px; padding-left: 3px; justify-content: flex-start; color: #aaa; background: #f0f1f2; border: 1px solid #ddd; }
.place .face { background: #c8def3; border-color: #6ca2da; color: #9aa9b8; }
.fam .row { gap: 7px; }
.options { flex: none; height: 33px; padding: 9px 10px; background: #e5eed7; color: #222; }

main { flex: 1; min-height: 0; display: flex; background: #f0f0f0; }
aside { width: 375px; margin-right: 5px; flex: none; display: flex; flex-direction: column; padding-bottom: 3px; }
.pal { flex: none; height: 27px; background: #bfcddb; display: flex; align-items: center; justify-content: space-between; padding: 0 5px 0 3px; margin-bottom: 3px; font-size: 13px; color: #222; }
.box { border: 1px solid #666; border-right-color: #ccc; border-bottom-color: #ddd; margin-right: 1px; }
.props { margin-bottom: 5px; flex: none; }
.typesel { height: 88px; display: flex; align-items: center; justify-content: space-between; padding: 0 2px 0 4px; background: linear-gradient(#fafafa, #ececec); }
.typesel .tri { border-top-color: #888; }
.thumb { width: 82px; height: 82px; border: 1px solid #ddd; background: #f3f3f3; }
.filter { height: 29px; padding: 0 1px; display: flex; gap: 6px; align-items: center; }
.combo { width: 275px; height: 28px; position: relative; }
.combo select { appearance: none; width: 100%; height: 28px; padding: 0 4px; font: inherit; color: #111; background: #e1e1e1; border: 1px solid #adadad; border-radius: 0; }
.combo svg { position: absolute; right: 5px; top: 11px; }
.etype { gap: 5px; color: #999; white-space: nowrap; }
.tablewrap { height: 214px; display: flex; justify-content: space-between; }
.clip { width: 351px; overflow: hidden; }
table { width: 351px; table-layout: fixed; border-collapse: separate; border-spacing: 0; }
.k { width: 169px; }
.b { width: 15px; }
th, td { height: 24px; padding: 0 0 2px 2px; text-align: left; font-weight: 400; line-height: 20px; background: #fff; white-space: nowrap; border-bottom: 1px dotted #999; border-right: 1px dotted #999; }
th { padding-left: 10px; }
.g th, .g td { background: #dcdcdc; border-color: #dcdcdc; padding-left: 2px; }
.ro { color: #777; }
.chev { width: 8px; height: 10px; margin-top: -6px; fill: none; stroke: #222; stroke-width: 1.5; }
.focus { border: 1px solid #000; padding: 0 0 0 2px; }
.focus input { appearance: none; display: block; width: 16px; height: 16px; margin: 0; border: 1px solid #333; background: #fff; }
.focus input::after { content: ""; display: block; width: 9px; height: 5px; margin: 3px 0 0 3px; border: solid #333; border-width: 0 0 1px 1px; transform: rotate(-45deg); }
.bt { padding: 1px 1px 0; }
.bt button { width: 100%; height: 22px; background: #e1e1e1; border: 1px solid #adadad; border-right-width: 2px; border-bottom-width: 2px; }
.bt .eq { color: #111; }
.vscroll { background: #f0f0f0; display: flex; flex-direction: column; align-items: center; }
.vscroll svg, .lt, .gt { fill: none; stroke: #555; stroke-width: 2; }
.small { width: 21px; padding: 7px 2px; }
.small i { width: 19px; height: 60px; background: #cdcdcd; margin: 6px 0 auto; }
.foot { height: 31px; display: flex; justify-content: space-between; align-items: center; padding: 0 1px 2px 2px; }
.foot a { color: #1a5fb4; margin-top: -4px; }
.foot button { width: 87px; height: 28px; background: #ccc; border: 1px solid #bfbfbf; color: #888; }
.browser { flex: 1; background: #fff; }
.tree, .tree ul { list-style: none; margin: 0; padding: 0; }
.tree { position: relative; padding-left: 4px; }
.tree::before { content: ""; position: absolute; left: 10px; top: 11px; height: 177px; border-left: 1px dotted #888; }
.node, .tree ul li { display: flex; align-items: center; height: 22px; position: relative; }
.tree ul li { padding-left: 26px; }
.tree ul li::before { content: ""; position: absolute; left: 32px; top: -6px; height: 28px; border-left: 1px dotted #888; }
.ex { width: 13px; height: 13px; flex: none; position: relative; border: 1px solid #888; background: linear-gradient(#1f3f8f, #1f3f8f) center / 7px 1px no-repeat, linear-gradient(#1f3f8f, #1f3f8f) center / 1px 7px no-repeat, #eee; }
.ex.minus { background: linear-gradient(#1f3f8f, #1f3f8f) center / 7px 1px no-repeat, #eee; }
.ex::after { content: ""; position: absolute; left: 13px; top: 5px; width: 9px; border-top: 1px dotted #888; }
.tree ul .ex { margin-right: 15px; }
.node svg { margin: 0 3px 0 9px; }
.node span { padding: 0 4px; }
.dash { width: 13px; height: 1px; position: relative; }
.dash::after { content: ""; position: absolute; left: 7px; width: 15px; border-top: 1px dotted #888; }
.hl { background: #e3e3e3; }

.view { flex: 1; min-width: 0; display: grid; grid-template: 1fr 22px / 1fr 19px; border: solid #666; border-width: 1px 0 0 1px; margin-bottom: 1px; }
.canvas { position: relative; overflow: hidden; background: #fff; }
.beam { position: absolute; left: 0; top: 0; }
.docctl { position: absolute; right: 3px; top: 7px; }
.cube { position: absolute; right: 9px; top: 44px; }
.cubetext { font: 11px "Open Sans", sans-serif; text-anchor: middle; fill: #888; }
.navbar { position: absolute; right: 1px; top: 149px; }
.large { padding: 9px 0 7px; }
.large i { width: 19px; height: 22px; background: #cdcdcd; margin: 356px 0 auto; }
.viewbar { display: flex; align-items: center; gap: 5px; padding: 0 7px 3px 30px; background: #eee; }
.scale { width: 57px; color: #111; font: 13px/20px "DejaVu Sans", sans-serif; }
.viewbar button svg { width: 20px; height: 18px; }
.lt { margin-left: 2px; }
.hthumb { width: 21px; height: 20px; margin-left: 586px; background: #cdcdcd; }
.gt { margin-left: auto; }
.grip { margin: 4px 0 0 4px; }

.status { flex: none; height: 29px; display: flex; justify-content: space-between; align-items: center; padding-left: 1px; background: #d3d3d3; border-top: 1px solid #888; }
.sicons { display: flex; gap: 10px; margin-right: 69px; }
.sicons svg { width: 20px; height: 20px; }
.taskbar { flex: none; height: 10px; overflow: hidden; display: flex; justify-content: flex-end; background: #000; color: #fff; }
time { font-size: 13px; padding-right: 80px; padding-top: 1px; }
.markup { position: absolute; left: 860px; top: 5px; pointer-events: none; }
```
FILE: beam.js
```js
// Hatching of the selected web face: overlapping scan lines of two coplanar triangles.
const dashRows = [425, 431, 442, 448, 454, 460, 461, 466, 471, 472, 476, 477];
const stripeGaps = [480, 486, 492, 497, 508, 520, 534];
const lineRows = [537, 548, 565, 566, 577, 582, 583, 594, 595, 599, 600, 606, 611, 612, 617, 618, 624, 625, 630, 634, 635, 640, 641, 645, 651, 657, 663, 669, 675];
const footRows = [834, 835, 851, 852, 863, 868, 869, 873, 880, 881, 886, 890, 891, 898, 903, 908];
const ramp = (x, a, b, from, to) => Math.round(from + (to - from) * Math.min(1, Math.max(0, (x - a) / (b - a))));

function painted(x, y) {
  const top = 294 + (x - 707) * 0.577;
  const bottom = 452 + (x - 738) * 0.577;
  if (y < top || y > bottom) return false;
  const p = (x - 738) % 6;
  const row = (y + 1) % 6;
  if (y < 456 + (x - 738) * 0.3485) {
    if (y < 480 && x < 880) {
      if (y === 329 || y === 332) return p < 4;
      if (y < 346) return false;
      if (y < 376) return (y - 346) % 3 === 0 && p < 4;
      const k = Math.floor((y - 376) / 3);
      if ((y - 376) % 3 === 2 && (y < 430 || p > 2)) return false;
      if (x < 827) {
        const w = y > 420 && x < 775 ? 4 : x > 800 ? 3 : 4;
        return (x - 738 + (k % 2 ? 3 : 0)) % 6 < w;
      }
      return p < ramp(x, 827, 880, 3, 1) && k % 2 === 0 || p < 2 && y > 395 && k % 2 === 1;
    }
    if (y < 480) return dashRows.includes(y) && p < ramp(x, 960, 1020, 4, 1);
    if (x < 1038) return !stripeGaps.includes(y) && p < ramp(x, 880, 1038, 5, 1);
    if (!lineRows.includes(y)) return false;
    return x < 1196 + (y - 583) * 0.55 || p < ramp(x, 1200, 1310, 3, 1);
  }
  if (x < 900) return !(p >= 4 && y % 4 === 0) && !(x > 840 && y % 6 === 0 && p > 2);
  if (x < 1044) {
    if ([565, 582, 599].includes(y)) return false;
    return !(x < 960 && [520, 526, 531, 537, 543, 548, 554].includes(y) && p > 1);
  }
  if (x < 1134) return ![565, 582].includes(y) && (p < ramp(x, 1044, 1134, 5, 4) || (row < 1 && y > 590));
  if (x < 1242) return row < 3 && (x % 3 !== 0 || x > 1225) || x % 3 === 1 || row === 3 && x % 3 === 2;
  if (y > 833 && footRows.includes(y) && x > 1404) return true;
  const gap = y < 780 ? row >= (y < 700 ? 4 : 5) : y === 784 || y === 785 || y === 800 || y === 801;
  if (gap) return false;
  if (x < 1302) return true;
  if (x < 1404) return p < 5;
  return x < 1513 && p < ramp(x, 1404, 1500, 3, 1);
}

let d = "";
for (let y = 300; y < 920; y++) {
  let start = -1;
  for (let x = 739; x <= 1536; x++) {
    const on = x < 1536 && painted(x, y);
    if (on && start < 0) start = x;
    if (!on && start >= 0) {
      d += `M${start} ${y}h${x - start}v1h${start - x}z`;
      start = -1;
    }
  }
}
document.getElementById("hatch").setAttribute("d", d);
```
